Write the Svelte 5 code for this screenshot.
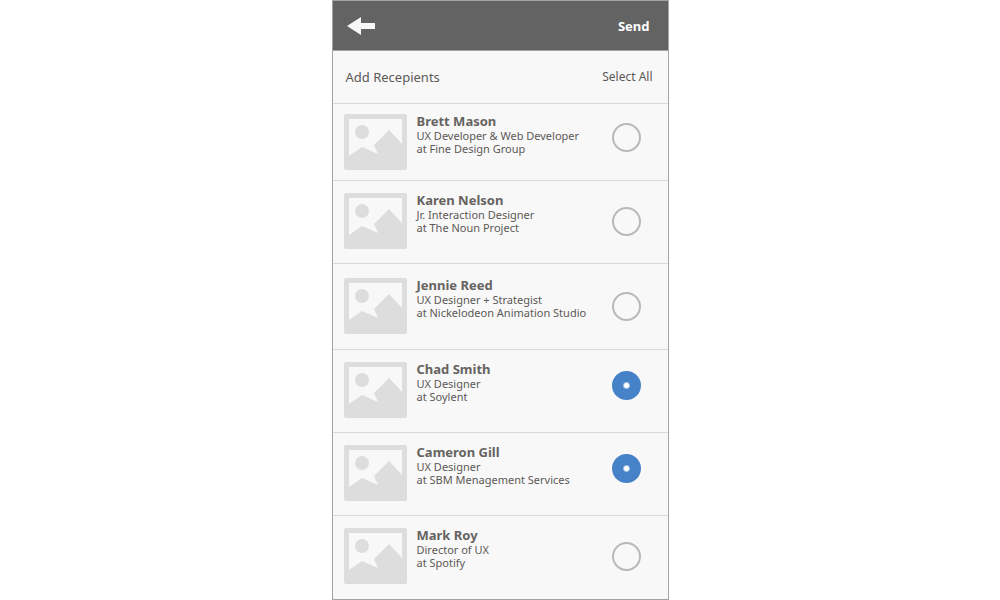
<script>
  let people = $state([
    { id: 1, name: 'Brett Mason', role: 'UX Developer & Web Developer', company: 'Fine Design Group', selected: false, size: 'tight', high: true },
    { id: 2, name: 'Karen Nelson', role: 'Jr. Interaction Designer', company: 'The Noun Project', selected: false, size: 'normal', high: false },
    { id: 3, name: 'Jennie Reed', role: 'UX Designer + Strategist', company: 'Nickelodeon Animation Studio', selected: false, size: 'loose', high: false },
    { id: 4, name: 'Chad Smith', role: 'UX Designer', company: 'Soylent', selected: true, size: 'normal', high: true },
    { id: 5, name: 'Cameron Gill', role: 'UX Designer', company: 'SBM Menagement Services', selected: true, size: 'normal', high: true },
    { id: 6, name: 'Mark Roy', role: 'Director of UX', company: 'Spotify', selected: false, size: 'normal', high: false }
  ]);

  function selectAll() {
    people.forEach((person) => (person.selected = true));
  }
</script>

<main class="screen">
  <header class="topbar">
    <button class="back" type="button" aria-label="Back">
      <svg width="28" height="18" viewBox="0 0 28 18">
        <path d="M0 9 L14 0 V6 H28 V12 H14 V18 Z" fill="#f7f7f7" />
      </svg>
    </button>
    <button class="send" type="button">Send</button>
  </header>

  <div class="toolbar">
    <h1>Add Recepients</h1>
    <button class="select-all" type="button" onclick={selectAll}>Select All</button>
  </div>

  <ul class="people">
    {#each people as person (person.id)}
      <li>
        <label class="person {person.size}" for="person-{person.id}">
          <svg class="photo" width="63" height="56" viewBox="0 0 63 56" aria-hidden="true">
            <rect width="63" height="56" rx="2" fill="#dddddd" />
            <path d="M5 5 H58 V30 L45 16 L30 31 L34 40 L18 33 L5 42 Z" fill="#f8f8f8" />
            <circle cx="18" cy="18" r="7" fill="#dddddd" />
          </svg>
          <span class="info">
            <strong>{person.name}</strong>
            <span>{person.role}</span>
            <span>at {person.company}</span>
          </span>
          <input
            id="person-{person.id}"
            class="pick"
            class:high={person.high}
            type="checkbox"
            bind:checked={person.selected}
          />
        </label>
      </li>
    {/each}
  </ul>
</main>

<style>
  :global(body) {
    margin: 0;
    background: #fff;
  }

  .screen {
    box-sizing: border-box;
    width: 100%;
    max-width: 337px;
    min-height: 100vh;
    margin: 0 auto;
    border: 1px solid #a3a3a3;
    background: #f8f8f8;
    color: #5c5856;
    font-family: 'Noto Sans', 'Open Sans', sans-serif;
  }

  button {
    padding: 0;
    border: 0;
    background: none;
    color: inherit;
    font-family: inherit;
    cursor: pointer;
  }

  .topbar,
  .toolbar {
    display: flex;
    align-items: center;
    justify-content: space-between;
  }

  .topbar {
    height: 49px;
    padding: 0 18px 0 14px;
    border-bottom: 1px solid #a3a3a3;
    background: #636363;
  }

  .back svg {
    display: block;
  }

  .send {
    color: #fff;
    font-size: 13px;
    line-height: 18px;
    font-weight: 700;
  }

  .toolbar {
    height: 52px;
    padding: 0 15px 0 13px;
    border-bottom: 1px solid #dadada;
  }

  h1 {
    margin: 0;
    font-size: 13px;
    line-height: 18px;
    font-weight: 400;
  }

  .select-all {
    font-size: 12px;
    line-height: 18px;
  }

  .people {
    margin: 0;
    padding: 0;
    list-style: none;
  }

  .people li {
    border-bottom: 1px solid #dadada;
  }

  .people li:last-child {
    border-bottom: 0;
  }

  .person {
    display: flex;
    align-items: center;
    padding: 12px 27px 14px 11px;
    cursor: pointer;
  }

  .person.tight {
    padding-top: 10px;
    padding-bottom: 10px;
  }

  .person.loose {
    padding-top: 14px;
    padding-bottom: 15px;
  }

  .photo {
    flex: none;
  }

  .info {
    display: flex;
    flex: 1;
    flex-direction: column;
    align-self: flex-start;
    margin-left: 10px;
    font-size: 11px;
    line-height: 13px;
  }

  .info strong {
    color: #666361;
    font-size: 13px;
    line-height: 15px;
  }

  .pick {
    flex: none;
    box-sizing: border-box;
    width: 29px;
    height: 29px;
    margin: 0;
    border: 2px solid #b9b9b9;
    border-radius: 50%;
    appearance: none;
    cursor: pointer;
  }

  .pick.high {
    margin-bottom: 10px;
  }

  .pick:checked {
    border-color: #4682c8;
    background: radial-gradient(circle, #fff 2px, #4682c8 4px);
  }
</style>
